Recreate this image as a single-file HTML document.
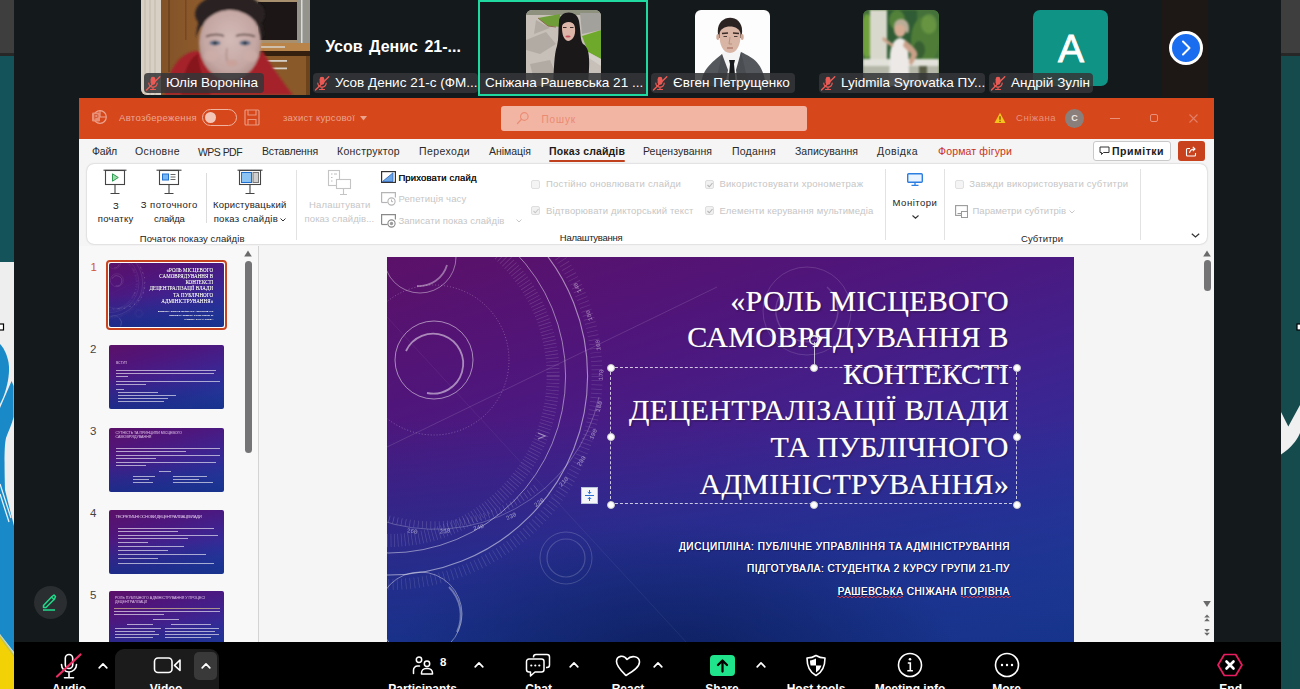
<!DOCTYPE html>
<html lang="uk">
<head>
<meta charset="utf-8">
<title>Zoom Meeting</title>
<style>
*{box-sizing:border-box;margin:0;padding:0}
html,body{width:1300px;height:689px;overflow:hidden;background:#14191c;font-family:"Liberation Sans","DejaVu Sans",sans-serif}
.abs{position:absolute}
#root{position:relative;width:1300px;height:689px;overflow:hidden;background:#14191c}
/* desktop edges */
#ledge{left:0;top:0;width:14px;height:689px;background:#fff;overflow:hidden}
#redge{left:1281px;top:0;width:19px;height:689px;background:#17494d;overflow:hidden}
/* gallery */
.tile{position:absolute;top:0;height:95px}
.nm{position:absolute;height:18px;line-height:18px;font-size:13.5px;color:#fff;background:rgba(52,54,56,.86);border-radius:4px;white-space:nowrap;padding:0 5px 0 22px;letter-spacing:0}
.nm svg{position:absolute;left:1px;top:1px}
/* ppt */
#ppt{left:79px;top:97px;width:1134px;height:544px;background:#e6e6e6;overflow:hidden}
#tbar{left:0;top:0;width:1134px;height:41px;background:#cc4420}
#tabs{left:0;top:41px;width:1134px;height:27px;background:#f5f5f5;font-size:11px;color:#333}
#tabs span{position:absolute;top:7px;white-space:nowrap}
#rib{left:8px;top:68px;width:1120px;height:79px;background:#fff;border-radius:7px;box-shadow:0 0 2px rgba(0,0,0,.25)}
#rib .t{position:absolute;font-size:9.5px;color:#222;white-space:nowrap;text-align:center}
#rib .d{color:#b9b9b9}
#rib .sep{position:absolute;width:1px;background:#dcdcdc}
#thumbs{left:0;top:150px;width:179px;height:394px;background:#f3f3f3}
#edit{left:179px;top:150px;width:955px;height:394px;background:#e9e9e9}
/* toolbar */
.lb{position:absolute;top:682.600px;font-size:12px;line-height:12px;font-weight:bold;color:#fff;white-space:nowrap;transform:translateX(-50%)}
.hd{position:absolute;width:8px;height:8px;border-radius:50%;background:#fff;border:1px solid #c9c9c9}
.th{border-radius:2px;overflow:hidden;background:linear-gradient(180deg,rgba(20,44,130,0) 50%,rgba(20,44,130,.7) 100%),linear-gradient(163deg,#5b1168 0%,#50157a 25%,#41218d 50%,#2f2e9a 72%,#2045aa 100%)}
.th i{position:absolute;height:1.300px;background:#fff;opacity:.6}
</style>
</head>
<body>
<div id="root">
<div id="ledge" class="abs"><svg width="14" height="689" viewBox="0 0 14 689" style="display:block">
<rect width="14" height="689" fill="#eeeeee"/>
<rect width="14" height="53" fill="#3e3e3e"/><rect y="53" width="14" height="3" fill="#272727"/>
<rect y="56" width="14" height="206" fill="#15535a"/>
<rect x="-1" y="324" width="4.5" height="6" fill="#fff" stroke="#000" stroke-width="1.2"/>
<path d="M0 344 C3 347 6 352 8 360 C10 368 9 378 6 389 C4 396 2 400 0 404Z" fill="#1a89c7"/>
<path d="M0 408 L11.6 381 L13.6 386 L13.6 417 C12 424 8 432 6 438 C4 446 4.5 470 5 490 L14 526 L14 652 L0 634Z" fill="#1a89c7"/>
<path d="M0 484 L11 518 M0 494 L9 522" stroke="#e8f0f4" stroke-width="1.300" fill="none"/>
<path d="M0 636 L14 655 L14 689 L0 689Z" fill="#f2d206"/>
<path d="M0 634 L14 653 L14 657 L0 638Z" fill="#9ab878" opacity=".5"/>
</svg></div>
  <div id="redge" class="abs"><svg width="19" height="689" viewBox="0 0 19 689" style="display:block">
<rect width="19" height="689" fill="#164b4e"/>
<rect width="19" height="53" fill="#3e3e3e"/><rect y="53" width="19" height="3" fill="#272727"/>
<rect x="16" y="324" width="4" height="6" fill="#fff" stroke="#000" stroke-width="1.2"/>
<path d="M0 412 L7.3 426.5 L19 405 L19 433 C17 438 14 442 12.5 443.5 C9 448 4 452 0 454.5Z" fill="#f0f0f0"/>
</svg></div>
  <div id="gallery" class="abs" style="left:0;top:0;width:1300px;height:97px">
<!-- tile 1 video -->
<div class="abs" style="left:141px;top:0;width:169px;height:95px;border-radius:0 0 0 6px;overflow:hidden;background:#8a5c30">
<svg width="169" height="95" viewBox="0 0 169 95" style="display:block">
<defs><filter id="b1" x="-20%" y="-20%" width="140%" height="140%"><feGaussianBlur stdDeviation="1.3"/></filter><filter id="b2" x="-20%" y="-20%" width="140%" height="140%"><feGaussianBlur stdDeviation="0.7"/></filter><filter id="b3" x="-30%" y="-30%" width="160%" height="160%"><feGaussianBlur stdDeviation="2.5"/></filter>
<linearGradient id="wood" x1="0" x2="1"><stop offset="0" stop-color="#7d4e25"/><stop offset=".35" stop-color="#8c5a2c"/><stop offset="1" stop-color="#815327"/></linearGradient>
<radialGradient id="skin" cx=".5" cy=".45" r=".6"><stop offset="0" stop-color="#d3bbb8"/><stop offset=".7" stop-color="#c4a6a2"/><stop offset="1" stop-color="#a98a84"/></radialGradient></defs>
<rect width="169" height="95" fill="url(#wood)"/>
<rect x="0" y="0" width="20" height="95" fill="#d8d0c4" filter="url(#b2)"/>
<path d="M4 0v95M9 0v95M14 0v95" stroke="#bfb6a8" stroke-width="1.500" opacity=".6"/>
<rect x="27" y="0" width="2" height="72" fill="#5f3816" opacity=".55"/><rect x="44" y="0" width="1.500" height="40" fill="#5f3816" opacity=".45"/>
<rect x="112" y="0" width="57" height="44" fill="#a8906e"/>
<rect x="117" y="2" width="39" height="38" fill="#1c1916" filter="url(#b2)"/>
<rect x="157" y="0" width="12" height="43" fill="#8f9494" opacity=".8"/><rect x="160" y="0" width="1.500" height="43" fill="#d9dcdc"/>
<rect x="116" y="43" width="53" height="8" fill="#b8844a" filter="url(#b2)"/>
<rect x="120" y="46" width="24" height="2" fill="#d5d0c8" opacity=".8"/>
<rect x="118" y="51" width="51" height="5" fill="#35200f"/>
<rect x="120" y="56" width="49" height="39" fill="#8a5929"/><rect x="165" y="56" width="4" height="39" fill="#6d431c"/>
<rect x="122" y="60" width="24" height="1.800" fill="#d4cec4"/><rect x="122" y="67.500" width="24" height="1.800" fill="#d4cec4"/>
<g filter="url(#b1)">
<path d="M24 95 C26 74 36 54 54 51 C60 50 62 56 66 66 L116 60 L121 50 C128 62 140 80 152 95Z" fill="#a5222b"/>
<path d="M40 95 C42 72 48 58 57 54 C58 66 62 80 70 95Z" fill="#86161f"/>
<ellipse cx="89" cy="14" rx="35" ry="20" fill="#2a2322"/>
<ellipse cx="89" cy="43" rx="31" ry="37" fill="url(#skin)"/>
<path d="M55 38 C56 8 76 0 89 0 C102 0 122 8 123 38 C117 18 102 10 89 10 C76 10 61 18 55 38Z" fill="#2a2322"/>
<ellipse cx="74" cy="43" rx="5.500" ry="2.600" fill="#5d6f88"/><ellipse cx="104" cy="43" rx="5.500" ry="2.600" fill="#5d6f88"/>
<ellipse cx="74" cy="43" rx="2" ry="2" fill="#2c3442"/><ellipse cx="104" cy="43" rx="2" ry="2" fill="#2c3442"/>
<path d="M65 36.500 Q74 33 83 36 M95 36 Q104 33 114 36.500" stroke="#4e3b38" stroke-width="1.500" fill="none"/>
<path d="M86 48 Q84 60 88 64 Q92 66 96 63" stroke="#b08f88" stroke-width="1.500" fill="none"/>
<ellipse cx="91" cy="63" rx="6" ry="3.500" fill="#c9a39b"/>
<ellipse cx="70" cy="56" rx="7" ry="6" fill="#cfaea8" opacity=".7"/><ellipse cx="110" cy="56" rx="7" ry="6" fill="#cfaea8" opacity=".7"/>
</g>
</svg></div>
<div class="nm" style="left:144px;top:72.500px;width:120px;height:20px;line-height:20px"><svg style="top:2px" width="16" height="16" viewBox="0 0 16 16"><rect x="5.600" y="1.800" width="4.800" height="8" rx="2.400" fill="#ea5a55"/><path d="M3.800 8a4.200 4.200 0 0 0 8.400 0M8 12.200v2M5.500 14.500h5" stroke="#ea5a55" stroke-width="1.200" fill="none" stroke-linecap="round"/><path d="M1.500 15L14.800 1.800" stroke="#ea5a55" stroke-width="1.400" stroke-linecap="round"/></svg>Юлія Вороніна</div>
<!-- tile 2 -->
<div class="abs" style="left:310px;top:38px;width:166px;text-align:center;font-size:16px;word-spacing:2px;font-weight:bold;color:#fff;white-space:nowrap">Усов Денис 21-...</div>
<div class="nm" style="left:313px;top:72.500px;width:165px;height:20px;line-height:20px"><svg style="top:2px" width="16" height="16" viewBox="0 0 16 16"><rect x="5.600" y="1.800" width="4.800" height="8" rx="2.400" fill="#ea5a55"/><path d="M3.800 8a4.200 4.200 0 0 0 8.400 0M8 12.200v2M5.500 14.500h5" stroke="#ea5a55" stroke-width="1.200" fill="none" stroke-linecap="round"/><path d="M1.500 15L14.800 1.800" stroke="#ea5a55" stroke-width="1.400" stroke-linecap="round"/></svg>Усов Денис 21-с (ФМ...</div>
<!-- tile 3 active -->
<div class="abs" style="left:478px;top:0;width:170px;height:96px;border:2px solid #20d9a0"></div>
<div class="abs" style="left:526px;top:10px;width:75px;height:76px;border-radius:6px;overflow:hidden;background:#c4beb7">
<svg width="75" height="76" viewBox="0 0 75 76" style="display:block;filter:blur(.7px)">
<rect width="75" height="76" fill="#c6c0b9"/>
<path d="M0 0H75V5H0z" fill="#8f917f"/>
<path d="M0 30 L20 22 L30 34 L14 44 L0 40z M4 54 L24 50 L30 64 L8 70z M10 10 L24 18 L8 24z" fill="#a9a39b" opacity=".7"/>
<path d="M12 8 L34 4 L36 17 L22 16Z" fill="#6f9e38"/><path d="M12 8 L22 16 L30 17" stroke="#8a6a4a" stroke-width="1" fill="none"/>
<path d="M54 3 L75 3 L75 20 L56 24Z" fill="#a3a19b"/>
<path d="M56 26 L75 20 L75 49 L62 42Z" fill="#6fa92c"/>
<path d="M62 42 L75 49 L75 56 L60 46z" fill="#d4cfc8"/>
<path d="M33 12 C33 0 51 -1 53 11 C55 22 54 30 57 34 C64 38 64 48 62 76 L27 76 C28 60 28 44 31 36 C33 28 32 20 33 12Z" fill="#1b181a"/>
<path d="M36 18 C36 8 48 8 49 18 C50 26 46 31 42 31 C38 30 36 25 36 18Z" fill="#dcb6a8"/>
<path d="M35 16 C36 6 49 5 50 17 C47 11 40 10 35 16Z" fill="#1b181a"/>
<ellipse cx="42" cy="26.500" rx="2.600" ry="1.100" fill="#c54f5e"/>
<path d="M37 17.500h3.500M44 17.500h3.500" stroke="#3a2a2a" stroke-width="1"/>
</svg></div>
<div class="nm" style="left:480px;top:72.500px;width:166px;height:21px;line-height:20px;padding-left:5px;border-radius:0">Сніжана Рашевська 21 ...</div>
<!-- tile 4 -->
<div class="abs" style="left:695px;top:10px;width:75px;height:76px;border-radius:6px;overflow:hidden;background:#fdfdfd">
<svg width="75" height="76" viewBox="0 0 75 76" style="display:block;filter:blur(.6px)">
<path d="M6 76 C7 62 12 56 27 44 L46 42 C58 48 68 52 71 76Z" fill="#54575b"/>
<path d="M27 44 L30 40 L44 40 L46 42 L42 76 L31 76Z" fill="#f5f5f5"/>
<path d="M27 44 L33 60 L30 76 L20 76z M46 42 L41 60 L43 76 L54 76z" fill="#4a4d51"/>
<path d="M34 50 L40 50 L39 54 L41 76 L33 76 L35 54Z" fill="#18191b"/>
<path d="M23 24 C20 3 49 2 47 23 L46 28 L24 28Z" fill="#2a2321"/>
<path d="M24.500 24 C25 14 45 14 45.500 24 C46 34 42 43 35 43 C28 43 24 34 24.500 24Z" fill="#d8b5a5"/>
<ellipse cx="22.800" cy="27" rx="1.500" ry="3" fill="#d0a898"/><ellipse cx="47.200" cy="27" rx="1.500" ry="3" fill="#d0a898"/>
<path d="M27 23.500 L33 23 M38 23 L44 23.500" stroke="#3a2b27" stroke-width="1.500"/>
<path d="M28.500 26.500h3.500M39 26.500h3.500" stroke="#4a3a36" stroke-width="1.200"/>
<path d="M35 27 L34 34 L37 34" stroke="#b8917f" stroke-width="1" fill="none"/>
<path d="M32 38 h6" stroke="#a8705f" stroke-width="1.200"/>
</svg></div>
<div class="nm" style="left:651px;top:72.500px;width:144px;height:20px;line-height:20px"><svg style="top:2px" width="16" height="16" viewBox="0 0 16 16"><rect x="5.600" y="1.800" width="4.800" height="8" rx="2.400" fill="#ea5a55"/><path d="M3.800 8a4.200 4.200 0 0 0 8.400 0M8 12.200v2M5.500 14.500h5" stroke="#ea5a55" stroke-width="1.200" fill="none" stroke-linecap="round"/><path d="M1.500 15L14.800 1.800" stroke="#ea5a55" stroke-width="1.400" stroke-linecap="round"/></svg>Євген Петрущенко</div>
<!-- tile 5 -->
<div class="abs" style="left:863px;top:10px;width:76px;height:76px;border-radius:6px;overflow:hidden;background:#4f7a3a">
<svg width="76" height="76" viewBox="0 0 76 76" style="display:block;filter:blur(.8px)"><g>
<rect width="76" height="76" fill="#44703a"/>
<rect x="24" y="0" width="30" height="50" fill="#2f5c34"/><ellipse cx="34" cy="10" rx="8" ry="10" fill="#6a9a40" opacity=".6"/>
<ellipse cx="62" cy="30" rx="14" ry="24" fill="#4f7d38"/><ellipse cx="66" cy="14" rx="8" ry="10" fill="#7aa848" opacity=".55"/><ellipse cx="56" cy="40" rx="6" ry="9" fill="#2d5230" opacity=".7"/>
<ellipse cx="4" cy="26" rx="6" ry="22" fill="#6fa23c"/>
<rect x="7" y="0" width="17" height="76" fill="#d9d8cc"/>
<rect x="0" y="49" width="76" height="7" fill="#e2e2da"/>
<rect x="0" y="56" width="76" height="20" fill="#b5b8a8"/>
<rect x="56" y="56" width="8" height="20" fill="#585c44"/>
<path d="M27 44 C28 34 32 28 38 28 L42 30 C46 36 46 50 46 76 L26 76Z" fill="#ece9e6"/>
<path d="M42 30 C50 36 56 42 54 46 L48 56 L46 52 L48 44 L40 36Z" fill="#c9a088"/>
<path d="M30 36 L22 30 L20 28" stroke="#c9a088" stroke-width="3" fill="none"/>
<ellipse cx="37" cy="19" rx="6" ry="8" fill="#d5ad94"/>
<path d="M31 18 C30 6 46 6 46 18 C46 24 44 24 43 22 C42 14 36 12 31 18Z" fill="#b9ad98"/>
</g></svg></div>
<div class="nm" style="left:819px;top:72.500px;width:166px;height:20px;line-height:20px"><svg style="top:2px" width="16" height="16" viewBox="0 0 16 16"><rect x="5.600" y="1.800" width="4.800" height="8" rx="2.400" fill="#ea5a55"/><path d="M3.800 8a4.200 4.200 0 0 0 8.400 0M8 12.200v2M5.500 14.500h5" stroke="#ea5a55" stroke-width="1.200" fill="none" stroke-linecap="round"/><path d="M1.500 15L14.800 1.800" stroke="#ea5a55" stroke-width="1.400" stroke-linecap="round"/></svg>Lyidmila Syrovatka ПУ...</div>
<!-- tile 6 -->
<div class="abs" style="left:1033px;top:10px;width:75px;height:76px;border-radius:7px;background:#0f9384;color:#fff;text-align:center;font-size:39px;line-height:77px;-webkit-text-stroke:.9px #fff;padding-left:1px">A</div>
<div class="nm" style="left:989px;top:72.500px;width:104px;height:20px;line-height:20px"><svg style="top:2px" width="16" height="16" viewBox="0 0 16 16"><rect x="5.600" y="1.800" width="4.800" height="8" rx="2.400" fill="#ea5a55"/><path d="M3.800 8a4.200 4.200 0 0 0 8.400 0M8 12.200v2M5.500 14.500h5" stroke="#ea5a55" stroke-width="1.200" fill="none" stroke-linecap="round"/><path d="M1.500 15L14.800 1.800" stroke="#ea5a55" stroke-width="1.400" stroke-linecap="round"/></svg>Андрій Зулін</div>
<!-- next arrow -->
<div class="abs" style="left:1162px;top:0;width:46px;height:97px;background:#1d1715"></div>
<div class="abs" style="left:1169px;top:31px;width:34px;height:34px;border-radius:50%;background:#1a6dee;border:3px solid #fff"></div>
<svg class="abs" style="left:1179px;top:38px" width="14" height="20" viewBox="0 0 14 20"><path d="M4 3.500L10.500 10L4 16.500" stroke="#fff" stroke-width="2" fill="none" stroke-linecap="round" stroke-linejoin="round"/></svg>
</div>
  <div id="ppt" class="abs" style="left:79px;top:98px;width:1135px;height:544px;overflow:hidden;background:#e9e9e9">
<div class="abs" id="pw" style="left:-79px;top:-98px;width:1300px;height:689px">
<!-- title bar -->
<div class="abs" style="left:79px;top:98px;width:1136px;height:41px;background:#d6471c"></div>
<svg class="abs" style="left:91px;top:109px" width="16" height="16" viewBox="0 0 16 16"><circle cx="9" cy="8" r="6.3" fill="none" stroke="#eda48f" stroke-width="1.2"/><path d="M9 1.700V8H15.300" stroke="#eda48f" stroke-width="1.100" fill="none"/><rect x="1" y="3.500" width="8" height="9" rx="1.200" fill="#e88f76"/><path d="M3.800 10.500V5.500H5.500a1.500 1.500 0 0 1 0 3H3.800" stroke="#d65a36" stroke-width="1.100" fill="none"/></svg>
<span style="position:absolute;left:119.0px;top:111.7px;white-space:nowrap;font-size:9.5px;letter-spacing:0.343px;color:#eca792">Автозбереження</span>
<div class="abs" style="left:202px;top:109px;width:35px;height:17px;border:1.5px solid #f0b3a0;border-radius:9px"></div>
<div class="abs" style="left:205px;top:112px;width:11px;height:11px;border-radius:50%;background:#f4c6b8"></div>
<svg class="abs" style="left:244px;top:109px" width="16" height="17" viewBox="0 0 16 17"><rect x="1" y="1" width="14" height="15" rx="1" fill="none" stroke="#e9987f" stroke-width="1.200"/><path d="M4 1v5h8V1M4 16v-5.500h8V16" stroke="#e9987f" stroke-width="1.100" fill="none"/></svg>
<span style="position:absolute;left:283.0px;top:111.7px;white-space:nowrap;font-size:9.5px;letter-spacing:0.224px;color:#eca38c">захист курсової</span>
<svg class="abs" style="left:360px;top:116px" width="7" height="5" viewBox="0 0 7 5"><path d="M0 0h7L3.500 4.500z" fill="#eca38c"/></svg>
<div class="abs" style="left:501px;top:105.500px;width:305.500px;height:25.500px;background:#f2b5a4;border-radius:3px"></div>
<svg class="abs" style="left:516px;top:111px" width="14" height="14" viewBox="0 0 14 14"><circle cx="8.300" cy="5.500" r="3.800" fill="none" stroke="#ea8d76" stroke-width="1.200"/><path d="M5.500 8.300L1.500 12.500" stroke="#ea8d76" stroke-width="1.300" stroke-linecap="round"/></svg>
<span style="position:absolute;left:541.5px;top:113.6px;white-space:nowrap;font-size:10px;letter-spacing:0.869px;color:#ea8a72">Пошук</span>
<svg class="abs" style="left:994px;top:112px" width="12" height="12" viewBox="0 0 12 12"><path d="M6 .8L11.500 11H.5z" fill="#f6c31c"/><path d="M6 4.200v3.600M6 8.800v1.100" stroke="#7a3c00" stroke-width="1.200"/></svg>
<span style="position:absolute;left:1016.0px;top:112.2px;white-space:nowrap;font-size:9.5px;letter-spacing:0.516px;color:#e9917a">Сніжана</span>
<div class="abs" style="left:1065px;top:108.500px;width:19px;height:19px;border-radius:50%;background:#8b7f7b;color:#f2e6e2;font-size:9px;line-height:19px;text-align:center;font-weight:bold">С</div>
<div class="abs" style="left:1110px;top:118px;width:10px;height:1.300px;background:#e9917a"></div>
<div class="abs" style="left:1150px;top:114px;width:8px;height:8px;border:1.200px solid #e9917a;border-radius:2px"></div>
<svg class="abs" style="left:1189px;top:114px" width="9" height="9" viewBox="0 0 9 9"><path d="M.5.500l8 8M8.500.500l-8 8" stroke="#e27f66" stroke-width="1.100"/></svg>
<!-- tabs row -->
<div class="abs" style="left:79px;top:139px;width:1136px;height:108px;background:#f5f5f5"></div>
<span style="position:absolute;left:92.0px;top:144.6px;white-space:nowrap;font-size:10.5px;letter-spacing:-0.207px;color:#2a2a2a">Файл</span>
<span style="position:absolute;left:135.0px;top:144.6px;white-space:nowrap;font-size:10.5px;letter-spacing:0.388px;color:#2a2a2a">Основне</span>
<span style="position:absolute;left:198.0px;top:145.5px;white-space:nowrap;font-size:10.5px;letter-spacing:-0.549px;color:#2a2a2a">WPS PDF</span>
<span style="position:absolute;left:262.0px;top:144.6px;white-space:nowrap;font-size:10.5px;letter-spacing:-0.138px;color:#2a2a2a">Вставлення</span>
<span style="position:absolute;left:337.0px;top:144.6px;white-space:nowrap;font-size:10.5px;letter-spacing:0.284px;color:#2a2a2a">Конструктор</span>
<span style="position:absolute;left:419.0px;top:144.6px;white-space:nowrap;font-size:10.5px;letter-spacing:0.428px;color:#2a2a2a">Переходи</span>
<span style="position:absolute;left:489.0px;top:144.6px;white-space:nowrap;font-size:10.5px;letter-spacing:-0.029px;color:#2a2a2a">Анімація</span>
<span style="position:absolute;left:549.0px;top:144.6px;white-space:nowrap;font-size:10.5px;letter-spacing:0.141px;color:#1a1a1a;font-weight:bold">Показ слайдів</span>
<div class="abs" style="left:549px;top:159.500px;width:76px;height:2px;background:#c0401e;border-radius:1px"></div>
<span style="position:absolute;left:643.0px;top:144.6px;white-space:nowrap;font-size:10.5px;letter-spacing:0.046px;color:#2a2a2a">Рецензування</span>
<span style="position:absolute;left:732.0px;top:144.6px;white-space:nowrap;font-size:10.5px;letter-spacing:0.228px;color:#2a2a2a">Подання</span>
<span style="position:absolute;left:795.0px;top:144.6px;white-space:nowrap;font-size:10.5px;letter-spacing:0.016px;color:#2a2a2a">Записування</span>
<span style="position:absolute;left:877.0px;top:144.6px;white-space:nowrap;font-size:10.5px;letter-spacing:0.460px;color:#2a2a2a">Довідка</span>
<span style="position:absolute;left:938.0px;top:144.6px;white-space:nowrap;font-size:10.5px;letter-spacing:0.165px;color:#c8321a">Формат фігури</span>
<div class="abs" style="left:1093px;top:141px;width:78px;height:20px;background:#fff;border:1px solid #c9c9c9;border-radius:3px"></div>
<svg class="abs" style="left:1099px;top:146px" width="11" height="10" viewBox="0 0 11 10"><path d="M1 1h9v5.500H4.500L2.500 8.500V6.500H1z" fill="none" stroke="#333" stroke-width="1"/></svg>
<span style="position:absolute;left:1112.0px;top:144.6px;white-space:nowrap;font-size:10.5px;letter-spacing:0.506px;color:#1a1a1a;font-weight:bold">Примітки</span>
<div class="abs" style="left:1178px;top:141px;width:27px;height:20px;background:#c9421e;border-radius:3px"></div>
<svg class="abs" style="left:1185px;top:145px" width="13" height="12" viewBox="0 0 13 12"><path d="M5 3.500H2.500a1 1 0 0 0-1 1V10a1 1 0 0 0 1 1H9.500a1 1 0 0 0 1-1V8" fill="none" stroke="#fff" stroke-width="1.100"/><path d="M4.500 8c.5-2.500 2-4 5-4M7.800 1.800L10 4 7.800 6.200" fill="none" stroke="#fff" stroke-width="1.100"/></svg>
<!--RIBBON-->
<div class="abs" style="left:87px;top:164px;width:1120px;height:80px;background:#fff;border-radius:7px;box-shadow:0 0 2px rgba(0,0,0,.28)"></div>
<!-- icon1: from beginning -->
<svg class="abs" style="left:103px;top:169px" width="24" height="26" viewBox="0 0 24 26"><path d="M.5 1.200h23" stroke="#444" stroke-width="1.100"/><rect x="2.500" y="1.500" width="19" height="14" fill="#fff" stroke="#444" stroke-width="1.100"/><path d="M12 15.500V24M7.500 24.500h9" stroke="#444" stroke-width="1.100"/><path d="M9.500 4.800L15.300 8.500 9.500 12.200z" fill="#9fdcae" stroke="#2e9b52" stroke-width="1"/></svg>
<span style="position:absolute;left:113.0px;top:200.0px;white-space:nowrap;font-size:9.5px;letter-spacing:0.250px;color:#222">З</span>
<span style="position:absolute;left:97.7px;top:213.3px;white-space:nowrap;font-size:9.5px;letter-spacing:0.342px;color:#222">початку</span>
<!-- icon2 -->
<svg class="abs" style="left:156px;top:169px" width="26" height="26" viewBox="0 0 26 26"><path d="M.5 1.200h25" stroke="#444" stroke-width="1.100"/><rect x="3.500" y="1.500" width="19" height="14" fill="#fff" stroke="#444" stroke-width="1.100"/><path d="M13 15.500V24M8.500 24.500h9" stroke="#444" stroke-width="1.100"/><rect x="6.500" y="5" width="6" height="6" fill="#79b7f2" stroke="#1f6fd0" stroke-width="1"/><path d="M14.500 5.500h5M14.500 8h5M14.500 10.500h5" stroke="#666" stroke-width="1"/></svg>
<span style="position:absolute;left:140.8px;top:199.2px;white-space:nowrap;font-size:9.5px;letter-spacing:0.451px;color:#222">З поточного</span>
<span style="position:absolute;left:153.9px;top:213.3px;white-space:nowrap;font-size:9.5px;letter-spacing:-0.153px;color:#222">слайда</span>
<div class="abs" style="left:205.500px;top:173px;width:1px;height:50px;background:#dcdcdc"></div>
<!-- icon3 -->
<svg class="abs" style="left:237px;top:169px" width="26" height="26" viewBox="0 0 26 26"><path d="M.5 1.200h25" stroke="#444" stroke-width="1.100"/><rect x="2.500" y="1.500" width="21" height="14" fill="#fff" stroke="#444" stroke-width="1.100"/><path d="M13 15.500V24M8.500 24.500h9" stroke="#444" stroke-width="1.100"/><rect x="4.500" y="3.500" width="10" height="10" fill="#8cc3f5" stroke="#1f6fd0" stroke-width="1"/><rect x="16" y="3.500" width="5.500" height="10" fill="#cfcfcf" stroke="#777" stroke-width="1"/></svg>
<span style="position:absolute;left:213.0px;top:199.2px;white-space:nowrap;font-size:9.5px;letter-spacing:0.189px;color:#222">Користувацький</span>
<span style="position:absolute;left:213.7px;top:213.3px;white-space:nowrap;font-size:9.5px;letter-spacing:0.288px;color:#222">показ слайдів</span>
<svg class="abs" style="left:280px;top:218px" width="6" height="4" viewBox="0 0 6 4"><path d="M.5.500L3 3 5.500.500" stroke="#333" stroke-width="1" fill="none"/></svg>
<span style="position:absolute;left:139.8px;top:232.5px;white-space:nowrap;font-size:9.5px;letter-spacing:0.057px;color:#222">Початок показу слайдів</span>
<div class="abs" style="left:296px;top:170px;width:1px;height:70px;background:#e2e2e2"></div>
<!-- icon4 disabled -->
<svg class="abs" style="left:327px;top:169px" width="26" height="28" viewBox="0 0 26 28"><rect x="1.500" y="1.500" width="11" height="15" fill="#fff" stroke="#c4c4c4" stroke-width="1.100"/><path d="M4 5h1.500M4 8.500h1.500M4 12h1.500M7 5h3" stroke="#bdbdbd" stroke-width="1.200"/><rect x="9.500" y="10.500" width="14" height="9" fill="#fff" stroke="#c4c4c4" stroke-width="1.100"/><path d="M16.500 19.500V25M13 25.500h7" stroke="#c4c4c4" stroke-width="1.100"/></svg>
<span style="position:absolute;left:309.0px;top:199.2px;white-space:nowrap;font-size:9.5px;letter-spacing:0.192px;color:#c6c6c6">Налаштувати</span>
<span style="position:absolute;left:304.6px;top:213.3px;white-space:nowrap;font-size:9.5px;letter-spacing:0.077px;color:#c6c6c6">показ слайдів...</span>
<!-- column -->
<svg class="abs" style="left:381px;top:171px" width="15" height="12" viewBox="0 0 15 12"><rect x=".6" y=".6" width="13.800" height="10.800" fill="#fff" stroke="#333" stroke-width="1.200"/><path d="M1.500 10.500L12 1.800V10.500z" fill="#6aa6e6" stroke="#2c65b8" stroke-width=".8"/></svg>
<span style="position:absolute;left:398.4px;top:171.5px;white-space:nowrap;font-size:9.5px;letter-spacing:0.140px;color:#1c1c1c;text-shadow:0 0 .3px #000">Приховати слайд</span>
<svg class="abs" style="left:381px;top:192px" width="15" height="14" viewBox="0 0 15 14"><path d="M.6 10.500V.6h13.800v5" fill="none" stroke="#b5b5b5" stroke-width="1.200"/><path d="M.6 10.500h6" stroke="#b5b5b5" stroke-width="1.200"/><circle cx="10.500" cy="9.500" r="3.600" fill="#fff" stroke="#b5b5b5" stroke-width="1.100"/><path d="M10.500 7.500v2.200h1.600" stroke="#b5b5b5" stroke-width="1" fill="none"/></svg>
<span style="position:absolute;left:398.4px;top:193.0px;white-space:nowrap;font-size:9.5px;letter-spacing:0.140px;color:#c6c6c6">Репетиція часу</span>
<svg class="abs" style="left:381px;top:214px" width="15" height="14" viewBox="0 0 15 14"><path d="M.6 10.500V.6h13.800v5" fill="none" stroke="#8a8a8a" stroke-width="1.200"/><path d="M.6 10.500h6" stroke="#8a8a8a" stroke-width="1.200"/><circle cx="10.500" cy="9.500" r="3.600" fill="#fff" stroke="#8a8a8a" stroke-width="1.100"/><circle cx="10.500" cy="9.500" r="1.700" fill="#9a9a9a"/></svg>
<span style="position:absolute;left:398.4px;top:214.7px;white-space:nowrap;font-size:9.5px;letter-spacing:0.088px;color:#c6c6c6">Записати показ слайдів</span>
<svg class="abs" style="left:516px;top:219px" width="6" height="4" viewBox="0 0 6 4"><path d="M.5.500L3 3 5.500.500" stroke="#c9c9c9" stroke-width="1" fill="none"/></svg>
<!-- checkboxes -->
<div class="abs" style="left:531px;top:179.500px;width:9px;height:9px;border:1px solid #e0e0e0;border-radius:2px;background:#f4f4f4"></div>
<span style="position:absolute;left:545.9px;top:177.7px;white-space:nowrap;font-size:9.5px;letter-spacing:0.229px;color:#c6c6c6">Постійно оновлювати слайди</span>
<div class="abs" style="left:531px;top:206px;width:9px;height:9px;border:1px solid #dedede;border-radius:2px;background:#f1f1f1"></div>
<svg class="abs" style="left:532px;top:207px" width="8" height="8" viewBox="0 0 8 8"><path d="M1.500 4L3.300 5.800 6.500 2" stroke="#c8c8c8" stroke-width="1.100" fill="none"/></svg>
<span style="position:absolute;left:545.9px;top:204.5px;white-space:nowrap;font-size:9.5px;letter-spacing:0.149px;color:#c6c6c6">Відтворювати дикторський текст</span>
<div class="abs" style="left:704.500px;top:179.500px;width:9px;height:9px;border:1px solid #dedede;border-radius:2px;background:#f1f1f1"></div>
<svg class="abs" style="left:705.500px;top:180.500px" width="8" height="8" viewBox="0 0 8 8"><path d="M1.500 4L3.300 5.800 6.500 2" stroke="#b5b5b5" stroke-width="1.100" fill="none"/></svg>
<span style="position:absolute;left:719.4px;top:177.7px;white-space:nowrap;font-size:9.5px;letter-spacing:0.271px;color:#c6c6c6">Використовувати хронометраж</span>
<div class="abs" style="left:704.500px;top:206px;width:9px;height:9px;border:1px solid #dedede;border-radius:2px;background:#f1f1f1"></div>
<svg class="abs" style="left:705.500px;top:207px" width="8" height="8" viewBox="0 0 8 8"><path d="M1.500 4L3.300 5.800 6.500 2" stroke="#b5b5b5" stroke-width="1.100" fill="none"/></svg>
<span style="position:absolute;left:719.4px;top:204.5px;white-space:nowrap;font-size:9.5px;letter-spacing:0.146px;color:#c6c6c6">Елементи керування мультимедіа</span>
<span style="position:absolute;left:559.8px;top:232.2px;white-space:nowrap;font-size:9.5px;letter-spacing:-0.248px;color:#222">Налаштування</span>
<div class="abs" style="left:885px;top:169px;width:1px;height:71px;background:#e2e2e2"></div>
<!-- monitors -->
<svg class="abs" style="left:907px;top:173px" width="16" height="13" viewBox="0 0 16 13"><rect x=".7" y=".7" width="14.600" height="8.600" rx="1" fill="#e8f3ff" stroke="#2b7de0" stroke-width="1.400"/><path d="M8 9.500V12M4.500 12.300h7" stroke="#2b7de0" stroke-width="1.300"/></svg>
<span style="position:absolute;left:892.6px;top:197.1px;white-space:nowrap;font-size:9.5px;letter-spacing:0.502px;color:#222">Монітори</span>
<svg class="abs" style="left:911.500px;top:214.500px" width="7" height="4" viewBox="0 0 7 4"><path d="M.5.500L3.500 3.200 6.500.500" stroke="#333" stroke-width="1.100" fill="none"/></svg>
<div class="abs" style="left:944px;top:169px;width:1px;height:71px;background:#e2e2e2"></div>
<div class="abs" style="left:955px;top:179.500px;width:9px;height:9px;border:1px solid #e0e0e0;border-radius:2px;background:#f4f4f4"></div>
<span style="position:absolute;left:969.3px;top:177.7px;white-space:nowrap;font-size:9.5px;letter-spacing:0.219px;color:#c6c6c6">Завжди використовувати субтитри</span>
<svg class="abs" style="left:955px;top:204.500px" width="13" height="13" viewBox="0 0 13 13"><rect x=".6" y=".6" width="11.800" height="9.800" fill="#fff" stroke="#9a9a9a" stroke-width="1.100"/><path d="M2.500 8.500h3.500M7 8.500h3.500" stroke="#9a9a9a" stroke-width="1.100"/><rect x="6.500" y="6.500" width="6" height="6" fill="#fff" stroke="#9a9a9a" stroke-width="1"/></svg>
<span style="position:absolute;left:972.5px;top:204.5px;white-space:nowrap;font-size:9.5px;letter-spacing:0.012px;color:#c6c6c6">Параметри субтитрів</span>
<svg class="abs" style="left:1069px;top:209.500px" width="6" height="4" viewBox="0 0 6 4"><path d="M.5.500L3 3 5.500.500" stroke="#c9c9c9" stroke-width="1" fill="none"/></svg>
<span style="position:absolute;left:1021.0px;top:232.5px;white-space:nowrap;font-size:9.5px;letter-spacing:0.029px;color:#222">Субтитри</span>
<div class="abs" style="left:1139.500px;top:169px;width:1px;height:71px;background:#e2e2e2"></div>
<svg class="abs" style="left:1191px;top:232.500px" width="9" height="5" viewBox="0 0 9 5"><path d="M.8.700L4.500 4 8.200.700" stroke="#333" stroke-width="1.200" fill="none"/></svg>
<!--/RIBBON-->
<!--PANEL-->
<div class="abs" style="left:79px;top:246px;width:179px;height:400px;background:#f8f8f8"></div>
<div class="abs" style="left:258px;top:246px;width:1px;height:400px;background:#d4d4d4"></div>
<div class="abs" style="left:259px;top:246px;width:956px;height:400px;background:#f5f5f5"></div>
<span style="position:absolute;left:90.5px;top:261.0px;white-space:nowrap;font-size:11.5px;color:#d2552f">1</span>
<span style="position:absolute;left:90.0px;top:343.0px;white-space:nowrap;font-size:11.5px;color:#444">2</span>
<span style="position:absolute;left:90.0px;top:425.0px;white-space:nowrap;font-size:11.5px;color:#444">3</span>
<span style="position:absolute;left:90.0px;top:507.0px;white-space:nowrap;font-size:11.5px;color:#444">4</span>
<span style="position:absolute;left:90.0px;top:589.0px;white-space:nowrap;font-size:11.5px;color:#444">5</span>
<div class="abs" style="left:106px;top:259.500px;width:121px;height:70px;border:2px solid #c8431f;border-radius:4px;background:#fff"></div>
<div class="abs th" style="left:109px;top:262.500px;width:115px;height:64px"><div style="position:absolute;left:0;top:0;width:687px;height:386px;transform:scale(.1675);transform-origin:0 0">
<svg class="abs" style="left:0;top:0" width="687" height="386" viewBox="0 0 687 386"><g fill="none" stroke="#fff"><circle cx="1.6" cy="119" r="177" stroke-width="1" opacity=".45"/><circle cx="1.6" cy="119" r="199" stroke-width="1.1" opacity=".5"/><circle cx="1.6" cy="119" r="164.5" stroke-width="13" stroke-dasharray=".7 2.8" opacity="0.17"/><circle cx="1.6" cy="119" r="208.5" stroke-width="11" stroke-dasharray=".7 3.6" opacity="0.15"/><circle cx="47" cy="103" r="39" stroke-width="1" opacity=".5"/><path d="M19 94 A30 30 0 1 1 40 136" stroke-width="1.800" opacity=".5"/><circle cx="47" cy="103" r="75" stroke-width=".8" stroke-dasharray="1 2" opacity=".35"/><circle cx="33" cy="0" r="36" stroke-width="1" opacity=".4"/><path d="M30 29 A29 29 0 0 0 60 8" stroke-width="1.800" opacity=".4"/><circle cx="33" cy="357" r="42" stroke-width="1" opacity=".4"/><path d="M62 330 A40 40 0 0 1 70 375" stroke-width="1.800" opacity=".35"/><path d="M-10 262 A168 168 0 0 0 212 140" stroke-width=".8" opacity=".3"/><path d="M-10 258 A163 163 0 0 0 150 230" stroke-width="7" stroke-dasharray=".7 3.500" opacity=".2"/><circle cx="179" cy="301" r="26" stroke-width=".8" opacity=".22"/><circle cx="179" cy="301" r="19" stroke-width="1.200" opacity=".18"/><circle cx="420" cy="54" r="44" stroke-width=".8" opacity=".18"/><path d="M392 40 A31 31 0 1 0 440 30" stroke-width="1.500" opacity=".16"/><path d="M0 190 L330 30" stroke-width=".6" opacity=".22"/><path d="M0 60 L300 386" stroke-width=".5" opacity=".12"/><path d="M151 176 l7 3 -7 3" stroke-width="1.300" opacity=".45"/></g><g font-size="6" fill="#fff" opacity=".5" font-family="Liberation Mono,monospace" text-anchor="middle"><text x="25" y="276" transform="rotate(7 25 276)">260</text><text x="58" y="276" transform="rotate(-4 58 276)">250</text><text x="92" y="272" transform="rotate(-15 92 272)">240</text><text x="125" y="261" transform="rotate(-26 125 261)">230</text><text x="153" y="247" transform="rotate(-36 153 247)">220</text><text x="178" y="226" transform="rotate(-47 178 226)">210</text><text x="196" y="205" transform="rotate(-56 196 205)">200</text><text x="208" y="178" transform="rotate(-65 208 178)">190</text><text x="214" y="150" transform="rotate(-74 214 150)">180</text><text x="216" y="118" transform="rotate(-85 216 118)">170</text><text x="213" y="88" transform="rotate(-95 213 88)">160</text><text x="204" y="58" transform="rotate(-106 204 58)">150</text><text x="192" y="30" transform="rotate(-117 192 30)">140</text></g></svg>
<div class="abs" style="left:-387px;top:-257px;width:1300px;height:689px;color:#fff">
<span style="position:absolute;left:730.3px;top:283.5px;white-space:nowrap;font-size:30px;letter-spacing:0.320px;font-family:'Liberation Serif','DejaVu Serif',serif;text-shadow:0 0 1px rgba(255,255,255,.55),1px 1px 2px rgba(0,0,0,.45)">«РОЛЬ МІСЦЕВОГО</span>
<span style="position:absolute;left:687.3px;top:320.1px;white-space:nowrap;font-size:30px;letter-spacing:0.353px;font-family:'Liberation Serif','DejaVu Serif',serif;text-shadow:0 0 1px rgba(255,255,255,.55),1px 1px 2px rgba(0,0,0,.45)">САМОВРЯДУВАННЯ В</span>
<span style="position:absolute;left:843.0px;top:356.7px;white-space:nowrap;font-size:30px;letter-spacing:-0.094px;font-family:'Liberation Serif','DejaVu Serif',serif;text-shadow:0 0 1px rgba(255,255,255,.55),1px 1px 2px rgba(0,0,0,.45)">КОНТЕКСТІ</span>
<span style="position:absolute;left:629.0px;top:393.3px;white-space:nowrap;font-size:30px;letter-spacing:0.373px;font-family:'Liberation Serif','DejaVu Serif',serif;text-shadow:0 0 1px rgba(255,255,255,.55),1px 1px 2px rgba(0,0,0,.45)">ДЕЦЕНТРАЛІЗАЦІЇ ВЛАДИ</span>
<span style="position:absolute;left:770.6px;top:429.9px;white-space:nowrap;font-size:30px;letter-spacing:0.084px;font-family:'Liberation Serif','DejaVu Serif',serif;text-shadow:0 0 1px rgba(255,255,255,.55),1px 1px 2px rgba(0,0,0,.45)">ТА ПУБЛІЧНОГО</span>
<span style="position:absolute;left:699.4px;top:466.5px;white-space:nowrap;font-size:30px;letter-spacing:0.363px;font-family:'Liberation Serif','DejaVu Serif',serif;text-shadow:0 0 1px rgba(255,255,255,.55),1px 1px 2px rgba(0,0,0,.45)">АДМІНІСТРУВАННЯ»</span>
<span style="position:absolute;left:679.0px;top:540.8px;white-space:nowrap;font-size:10px;letter-spacing:0.587px;text-shadow:0 0 .4px #fff,1px 1px 1px rgba(0,0,0,.4)">ДИСЦИПЛІНА: ПУБЛІЧНЕ УПРАВЛІННЯ ТА АДМІНІСТРУВАННЯ</span>
<span style="position:absolute;left:747.1px;top:563.3px;white-space:nowrap;font-size:10px;letter-spacing:0.512px;text-shadow:0 0 .4px #fff,1px 1px 1px rgba(0,0,0,.4)">ПІДГОТУВАЛА: СТУДЕНТКА 2 КУРСУ ГРУПИ 21-ПУ</span>
<span style="position:absolute;left:837.7px;top:586.1px;white-space:nowrap;font-size:10px;letter-spacing:0.507px;text-shadow:0 0 .4px #fff,1px 1px 1px rgba(0,0,0,.4)">РАШЕВСЬКА СНІЖАНА ІГОРІВНА</span>
<svg class="abs" style="left:837px;top:595px" width="175" height="4" viewBox="0 0 175 4"><path d="M0 2 q1 -2 2 0 t2 0 t2 0 t2 0 t2 0 t2 0 t2 0 t2 0 t2 0 t2 0 t2 0 t2 0 t2 0 t2 0 t2 0 t2 0 t2 0 t2 0 t2 0 t2 0 t2 0 t2 0 t2 0 t2 0 t2 0 t2 0 t2 0 t2 0 t2 0 t2 0 t2 0 t2 0 t2 0 M124 2 q1 -2 2 0 t2 0 t2 0 t2 0 t2 0 t2 0 t2 0 t2 0 t2 0 t2 0 t2 0 t2 0 t2 0 t2 0 t2 0 t2 0 t2 0 t2 0 t2 0 t2 0 t2 0 t2 0 t2 0 t2 0 t2 0" stroke="#e03a3a" stroke-width=".9" fill="none"/></svg>
</div>
</div></div>
<div class="abs th" style="left:109px;top:345px;width:115px;height:64px">
<span style="position:absolute;left:7.0px;top:15.5px;white-space:nowrap;font-size:3.4px;letter-spacing:-0.031px;color:#ecd4f2;opacity:.9">ВСТУП</span><i style="left:7px;top:25px;width:100px"></i><i style="left:7px;top:28px;width:98px"></i><i style="left:7px;top:31px;width:12px"></i><i style="left:7px;top:36px;width:104px"></i><i style="left:7px;top:39px;width:30px"></i><i style="left:7px;top:44px;width:8px"></i><i style="left:9px;top:47px;width:40px"></i><i style="left:9px;top:50px;width:58px"></i><i style="left:9px;top:53px;width:50px"></i><i style="left:9px;top:56px;width:46px"></i></div>
<div class="abs th" style="left:109px;top:427.500px;width:115px;height:64px">
<span style="position:absolute;left:6.5px;top:3.3px;white-space:nowrap;font-size:3.6px;letter-spacing:-0.013px;color:#ecd4f2;opacity:.9">СУТНІСТЬ ТА ПРИНЦИПИ МІСЦЕВОГО</span><span style="position:absolute;left:6.5px;top:7.9px;white-space:nowrap;font-size:3.6px;letter-spacing:0.055px;color:#ecd4f2;opacity:.9">САМОВРЯДУВАННЯ</span><i style="left:7px;top:20px;width:104px"></i><i style="left:7px;top:23px;width:70px"></i><i style="left:7px;top:27px;width:104px"></i><i style="left:7px;top:30px;width:40px"></i><i style="left:7px;top:34px;width:100px"></i><i style="left:7px;top:37px;width:30px"></i><i style="left:50px;top:43px;width:12px"></i><i style="left:24px;top:48px;width:22px"></i><i style="left:24px;top:51px;width:16px"></i><i style="left:24px;top:54px;width:20px"></i><i style="left:64px;top:48px;width:34px"></i><i style="left:64px;top:51px;width:26px"></i><i style="left:64px;top:54px;width:40px"></i></div>
<div class="abs th" style="left:109px;top:509.500px;width:115px;height:64px">
<span style="position:absolute;left:6.5px;top:4.7px;white-space:nowrap;font-size:4.4px;letter-spacing:-0.484px;color:#ecd4f2;opacity:.9">ТЕОРЕТИЧНІ ОСНОВИ ДЕЦЕНТРАЛІЗАЦІЇ ВЛАДИ</span><i style="left:9px;top:18px;width:96px"></i><i style="left:9px;top:21px;width:60px"></i><i style="left:9px;top:25px;width:100px"></i><i style="left:9px;top:28px;width:70px"></i><i style="left:9px;top:32px;width:30px"></i><i style="left:9px;top:36px;width:66px"></i><i style="left:9px;top:40px;width:50px"></i><i style="left:9px;top:44px;width:88px"></i><i style="left:9px;top:48px;width:40px"></i><i style="left:9px;top:53px;width:96px"></i></div>
<div class="abs th" style="left:109px;top:591px;width:115px;height:64px">
<span style="position:absolute;left:6.0px;top:5.0px;white-space:nowrap;font-size:3.6px;letter-spacing:0.010px;color:#ecd4f2;opacity:.9">РОЛЬ ПУБЛІЧНОГО АДМІНІСТРУВАННЯ У ПРОЦЕСІ</span><span style="position:absolute;left:6.0px;top:9.4px;white-space:nowrap;font-size:3.6px;letter-spacing:0.007px;color:#ecd4f2;opacity:.9">ДЕЦЕНТРАЛІЗАЦІЇ</span><i style="left:5px;top:17px;width:106px;background:#f0e090"></i><i style="left:5px;top:20px;width:106px"></i><i style="left:5px;top:23px;width:50px"></i><i style="left:44px;top:28px;width:26px"></i><i style="left:18px;top:33px;width:26px"></i><i style="left:62px;top:33px;width:40px"></i><i style="left:6px;top:37px;width:46px"></i><i style="left:6px;top:40px;width:40px"></i><i style="left:6px;top:43px;width:44px"></i><i style="left:6px;top:46px;width:38px"></i><i style="left:56px;top:37px;width:54px"></i><i style="left:56px;top:40px;width:50px"></i><i style="left:56px;top:43px;width:54px"></i><i style="left:56px;top:46px;width:46px"></i></div>
<!-- thumbs scrollbar -->
<svg class="abs" style="left:244px;top:250px" width="8" height="7" viewBox="0 0 8 7"><path d="M4 .5L7.800 6.500H.2z" fill="#6a6a6a"/></svg>
<div class="abs" style="left:244.500px;top:261px;width:7px;height:192px;border-radius:4px;background:#747476"></div>
<!-- main scrollbar -->
<svg class="abs" style="left:1203px;top:250px" width="8" height="7" viewBox="0 0 8 7"><path d="M4 .5L7.800 6.500H.2z" fill="#6a6a6a"/></svg>
<div class="abs" style="left:1204px;top:260px;width:6.500px;height:31px;border-radius:3.500px;background:#747476"></div>
<svg class="abs" style="left:1203px;top:600px" width="8" height="40" viewBox="0 0 8 40"><path d="M.2 1h7.600L4 7z" fill="#6a6a6a"/><path d="M4 14.500l2.800 3H1.200zM4 18.200l2.800 3H1.200z" fill="#6a6a6a"/><path d="M4 32l2.800-3H1.200zM4 35.700l2.800-3H1.200z" fill="#6a6a6a"/></svg>
<!--/PANEL-->
<!--SLIDE-->
<div class="abs" style="left:387px;top:257px;width:687px;height:386px;overflow:hidden;background:radial-gradient(ellipse 55% 50% at 42% 106%,rgba(12,28,88,.85),rgba(12,28,88,0) 75%),linear-gradient(180deg,rgba(22,50,136,0) 42%,rgba(22,50,136,.9) 100%),linear-gradient(163deg,#5b1168 0%,#50157a 25%,#41218d 50%,#2f2e9a 72%,#2045aa 100%)">
<!--SLIDE_BEGIN-->
<svg class="abs" style="left:0;top:0" width="687" height="386" viewBox="0 0 687 386"><g fill="none" stroke="#fff"><circle cx="1.6" cy="119" r="177" stroke-width="1" opacity=".45"/><circle cx="1.6" cy="119" r="199" stroke-width="1.1" opacity=".5"/><circle cx="1.6" cy="119" r="164.5" stroke-width="13" stroke-dasharray=".7 2.8" opacity="0.17"/><circle cx="1.6" cy="119" r="208.5" stroke-width="11" stroke-dasharray=".7 3.6" opacity="0.15"/><circle cx="47" cy="103" r="39" stroke-width="1" opacity=".5"/><path d="M19 94 A30 30 0 1 1 40 136" stroke-width="1.800" opacity=".5"/><circle cx="47" cy="103" r="75" stroke-width=".8" stroke-dasharray="1 2" opacity=".35"/><circle cx="33" cy="0" r="36" stroke-width="1" opacity=".4"/><path d="M30 29 A29 29 0 0 0 60 8" stroke-width="1.800" opacity=".4"/><circle cx="33" cy="357" r="42" stroke-width="1" opacity=".4"/><path d="M62 330 A40 40 0 0 1 70 375" stroke-width="1.800" opacity=".35"/><path d="M-10 262 A168 168 0 0 0 212 140" stroke-width=".8" opacity=".3"/><path d="M-10 258 A163 163 0 0 0 150 230" stroke-width="7" stroke-dasharray=".7 3.500" opacity=".2"/><circle cx="179" cy="301" r="26" stroke-width=".8" opacity=".22"/><circle cx="179" cy="301" r="19" stroke-width="1.200" opacity=".18"/><circle cx="420" cy="54" r="44" stroke-width=".8" opacity=".18"/><path d="M392 40 A31 31 0 1 0 440 30" stroke-width="1.500" opacity=".16"/><path d="M0 190 L330 30" stroke-width=".6" opacity=".22"/><path d="M0 60 L300 386" stroke-width=".5" opacity=".12"/><path d="M151 176 l7 3 -7 3" stroke-width="1.300" opacity=".45"/></g><g font-size="6" fill="#fff" opacity=".5" font-family="Liberation Mono,monospace" text-anchor="middle"><text x="25" y="276" transform="rotate(7 25 276)">260</text><text x="58" y="276" transform="rotate(-4 58 276)">250</text><text x="92" y="272" transform="rotate(-15 92 272)">240</text><text x="125" y="261" transform="rotate(-26 125 261)">230</text><text x="153" y="247" transform="rotate(-36 153 247)">220</text><text x="178" y="226" transform="rotate(-47 178 226)">210</text><text x="196" y="205" transform="rotate(-56 196 205)">200</text><text x="208" y="178" transform="rotate(-65 208 178)">190</text><text x="214" y="150" transform="rotate(-74 214 150)">180</text><text x="216" y="118" transform="rotate(-85 216 118)">170</text><text x="213" y="88" transform="rotate(-95 213 88)">160</text><text x="204" y="58" transform="rotate(-106 204 58)">150</text><text x="192" y="30" transform="rotate(-117 192 30)">140</text></g></svg>
<div class="abs" style="left:-387px;top:-257px;width:1300px;height:689px;color:#fff">
<span style="position:absolute;left:730.3px;top:283.5px;white-space:nowrap;font-size:30px;letter-spacing:0.320px;font-family:'Liberation Serif','DejaVu Serif',serif;text-shadow:0 0 1px rgba(255,255,255,.55),1px 1px 2px rgba(0,0,0,.45)">«РОЛЬ МІСЦЕВОГО</span>
<span style="position:absolute;left:687.3px;top:320.1px;white-space:nowrap;font-size:30px;letter-spacing:0.353px;font-family:'Liberation Serif','DejaVu Serif',serif;text-shadow:0 0 1px rgba(255,255,255,.55),1px 1px 2px rgba(0,0,0,.45)">САМОВРЯДУВАННЯ В</span>
<span style="position:absolute;left:843.0px;top:356.7px;white-space:nowrap;font-size:30px;letter-spacing:-0.094px;font-family:'Liberation Serif','DejaVu Serif',serif;text-shadow:0 0 1px rgba(255,255,255,.55),1px 1px 2px rgba(0,0,0,.45)">КОНТЕКСТІ</span>
<span style="position:absolute;left:629.0px;top:393.3px;white-space:nowrap;font-size:30px;letter-spacing:0.373px;font-family:'Liberation Serif','DejaVu Serif',serif;text-shadow:0 0 1px rgba(255,255,255,.55),1px 1px 2px rgba(0,0,0,.45)">ДЕЦЕНТРАЛІЗАЦІЇ ВЛАДИ</span>
<span style="position:absolute;left:770.6px;top:429.9px;white-space:nowrap;font-size:30px;letter-spacing:0.084px;font-family:'Liberation Serif','DejaVu Serif',serif;text-shadow:0 0 1px rgba(255,255,255,.55),1px 1px 2px rgba(0,0,0,.45)">ТА ПУБЛІЧНОГО</span>
<span style="position:absolute;left:699.4px;top:466.5px;white-space:nowrap;font-size:30px;letter-spacing:0.363px;font-family:'Liberation Serif','DejaVu Serif',serif;text-shadow:0 0 1px rgba(255,255,255,.55),1px 1px 2px rgba(0,0,0,.45)">АДМІНІСТРУВАННЯ»</span>
<span style="position:absolute;left:679.0px;top:540.8px;white-space:nowrap;font-size:10px;letter-spacing:0.587px;text-shadow:0 0 .4px #fff,1px 1px 1px rgba(0,0,0,.4)">ДИСЦИПЛІНА: ПУБЛІЧНЕ УПРАВЛІННЯ ТА АДМІНІСТРУВАННЯ</span>
<span style="position:absolute;left:747.1px;top:563.3px;white-space:nowrap;font-size:10px;letter-spacing:0.512px;text-shadow:0 0 .4px #fff,1px 1px 1px rgba(0,0,0,.4)">ПІДГОТУВАЛА: СТУДЕНТКА 2 КУРСУ ГРУПИ 21-ПУ</span>
<span style="position:absolute;left:837.7px;top:586.1px;white-space:nowrap;font-size:10px;letter-spacing:0.507px;text-shadow:0 0 .4px #fff,1px 1px 1px rgba(0,0,0,.4)">РАШЕВСЬКА СНІЖАНА ІГОРІВНА</span>
<svg class="abs" style="left:837px;top:595px" width="175" height="4" viewBox="0 0 175 4"><path d="M0 2 q1 -2 2 0 t2 0 t2 0 t2 0 t2 0 t2 0 t2 0 t2 0 t2 0 t2 0 t2 0 t2 0 t2 0 t2 0 t2 0 t2 0 t2 0 t2 0 t2 0 t2 0 t2 0 t2 0 t2 0 t2 0 t2 0 t2 0 t2 0 t2 0 t2 0 t2 0 t2 0 t2 0 t2 0 M124 2 q1 -2 2 0 t2 0 t2 0 t2 0 t2 0 t2 0 t2 0 t2 0 t2 0 t2 0 t2 0 t2 0 t2 0 t2 0 t2 0 t2 0 t2 0 t2 0 t2 0 t2 0 t2 0 t2 0 t2 0 t2 0 t2 0" stroke="#e03a3a" stroke-width=".9" fill="none"/></svg>
</div>
<!--SLIDE_END-->
<!-- selection -->
<div class="abs" style="left:223px;top:110px;width:407px;height:137px;border:1px dashed rgba(255,255,255,.75)"></div>
<div class="abs" style="left:426.500px;top:85px;width:1px;height:25px;background:rgba(255,255,255,.7)"></div>
<svg class="abs" style="left:420px;top:76px" width="14" height="14" viewBox="0 0 14 14"><circle cx="7" cy="7" r="4.200" fill="none" stroke="#e8e8e8" stroke-width="1.600"/><path d="M9 1.500l2.500 2-3 1z" fill="#e8e8e8"/></svg>
<div class="hd" style="left:219.500px;top:106.500px"></div><div class="hd" style="left:423px;top:106.500px"></div><div class="hd" style="left:626px;top:106.500px"></div>
<div class="hd" style="left:219.500px;top:175.500px"></div><div class="hd" style="left:626px;top:175.500px"></div>
<div class="hd" style="left:219.500px;top:243.500px"></div><div class="hd" style="left:423px;top:243.500px"></div><div class="hd" style="left:626px;top:243.500px"></div>
<div class="abs" style="left:194px;top:230px;width:17px;height:17px;background:#f4f6fa;border:1px solid #b8c4d8"></div>
<svg class="abs" style="left:196px;top:232px" width="13" height="13" viewBox="0 0 13 13"><path d="M2 6.500h9" stroke="#2b6fd0" stroke-width="1"/><path d="M6.500 1v3.500M4.800 3l1.700 1.700L8.200 3M6.500 12V8.500M4.800 10l1.700-1.700L8.200 10" stroke="#2b6fd0" stroke-width="1" fill="none"/></svg>
</div>
<!--/SLIDE-->
</div></div>
<!-- pen button -->
<div class="abs" style="left:33.500px;top:585.500px;width:33px;height:33px;border-radius:50%;background:#2a2e30"></div>
<svg class="abs" style="left:40px;top:592px" width="20" height="20" viewBox="0 0 20 20"><path d="M3.500 13.500L12 4.500l2-1.500 1.500 1.500L14.500 7 6 15.500H3.500z" fill="none" stroke="#1fdc8c" stroke-width="1.500" stroke-linejoin="round"/><path d="M11.500 5l3 3" stroke="#1fdc8c" stroke-width="1.200"/><path d="M3 18h12" stroke="#1fdc8c" stroke-width="1.500"/></svg>
<div id="tool" class="abs" style="left:14px;top:642px;width:1267px;height:47px;background:#000;overflow:hidden">
<div class="abs" style="left:-14px;top:-642px;width:1300px;height:689px">
<!-- audio -->
<svg class="abs" style="left:55px;top:652px" width="28" height="28" viewBox="0 0 28 28"><rect x="10.300" y="2.500" width="7.400" height="14" rx="3.700" fill="none" stroke="#fff" stroke-width="1.600"/><path d="M6.500 12.500a7.500 7.500 0 0 0 15 0M14 20v5.500M9.500 25.800h9" fill="none" stroke="#fff" stroke-width="1.600" stroke-linecap="round"/><path d="M2 24.500L25.500 2.500" stroke="#ea2e63" stroke-width="2.200" stroke-linecap="round"/></svg>
<svg class="abs cr" style="left:97.500px;top:661.500px" width="10" height="7" viewBox="0 0 10 7"><path d="M1.200 5.800L5 1.800l3.800 4" fill="none" stroke="#fff" stroke-width="1.700" stroke-linecap="round" stroke-linejoin="round"/></svg>
<div class="lb" style="left:69px">Audio</div>
<!-- video -->
<div class="abs" style="left:115px;top:648.500px;width:104px;height:60px;border-radius:9px;background:#1b1b1b"></div>
<div class="abs" style="left:194px;top:651.500px;width:23px;height:28px;border-radius:5px;background:#393939"></div>
<svg class="abs" style="left:153px;top:656px" width="29" height="19" viewBox="0 0 29 19"><rect x="1.500" y="2" width="17.500" height="14.500" rx="3.500" fill="none" stroke="#fff" stroke-width="1.600"/><path d="M21.500 9.300L27 4v10.500z" fill="none" stroke="#fff" stroke-width="1.600" stroke-linejoin="round"/></svg>
<svg class="abs cr" style="left:201px;top:661.500px" width="10" height="7" viewBox="0 0 10 7"><path d="M1.200 5.800L5 1.800l3.800 4" fill="none" stroke="#fff" stroke-width="1.700" stroke-linecap="round" stroke-linejoin="round"/></svg>
<div class="lb" style="left:166px">Video</div>
<!-- participants -->
<svg class="abs" style="left:412px;top:655px" width="23" height="22" viewBox="0 0 23 22"><circle cx="7" cy="4.800" r="2.700" fill="none" stroke="#fff" stroke-width="1.500"/><path d="M1.500 18.500v-3.500a4 4 0 0 1 4-4h2" fill="none" stroke="#fff" stroke-width="1.500" stroke-linecap="round"/><circle cx="15" cy="8.800" r="2.700" fill="none" stroke="#fff" stroke-width="1.500"/><path d="M9.500 19v-1a4.500 4.500 0 0 1 4.500-4.500h2a4.500 4.500 0 0 1 4.500 4.500v1z" fill="none" stroke="#fff" stroke-width="1.500" stroke-linejoin="round"/></svg>
<div class="abs" style="left:440px;top:656px;font-size:11.500px;line-height:12px;color:#fff;font-weight:bold">8</div>
<svg class="abs cr" style="left:473.500px;top:661px" width="10" height="7" viewBox="0 0 10 7"><path d="M1.200 5.800L5 1.800l3.800 4" fill="none" stroke="#fff" stroke-width="1.700" stroke-linecap="round" stroke-linejoin="round"/></svg>
<div class="lb" style="left:422.700px">Participants</div>
<!-- chat -->
<svg class="abs" style="left:525px;top:653px" width="26" height="25" viewBox="0 0 26 25"><path d="M8.500 4.500V4a2.500 2.500 0 0 1 2.500-2.500h11A2.500 2.500 0 0 1 24.500 4v8a2.500 2.500 0 0 1-2.500 2.500h-1" fill="none" stroke="#fff" stroke-width="1.500"/><path d="M4 6h12.500A2.500 2.500 0 0 1 19 8.500v8a2.500 2.500 0 0 1-2.500 2.500H10l-4.500 4v-4H4a2.500 2.500 0 0 1-2.500-2.500v-8A2.500 2.500 0 0 1 4 6z" fill="none" stroke="#fff" stroke-width="1.500" stroke-linejoin="round"/><circle cx="6.300" cy="12.500" r="1.100" fill="#fff"/><circle cx="10.300" cy="12.500" r="1.100" fill="#fff"/><circle cx="14.300" cy="12.500" r="1.100" fill="#fff"/></svg>
<svg class="abs cr" style="left:568.500px;top:661px" width="10" height="7" viewBox="0 0 10 7"><path d="M1.200 5.800L5 1.800l3.800 4" fill="none" stroke="#fff" stroke-width="1.700" stroke-linecap="round" stroke-linejoin="round"/></svg>
<div class="lb" style="left:538.600px">Chat</div>
<!-- react -->
<svg class="abs" style="left:614px;top:654px" width="28" height="24" viewBox="0 0 28 24"><path d="M13 5.500C10 .5 2.500 1.500 2.500 7.500c0 5 5 9.500 9.500 14 6-3.500 13.500-8 13.500-13.500 0-6-8.500-7-12.500-2.500z" fill="none" stroke="#fff" stroke-width="1.600" stroke-linejoin="round"/></svg>
<svg class="abs cr" style="left:653px;top:661px" width="10" height="7" viewBox="0 0 10 7"><path d="M1.200 5.800L5 1.800l3.800 4" fill="none" stroke="#fff" stroke-width="1.700" stroke-linecap="round" stroke-linejoin="round"/></svg>
<div class="lb" style="left:628px">React</div>
<!-- share -->
<div class="abs" style="left:710px;top:655px;width:25px;height:20.500px;border-radius:4px;background:#20e48c"></div>
<svg class="abs" style="left:716px;top:658px" width="13" height="15" viewBox="0 0 13 15"><path d="M6.500 13.500V3M2 7l4.500-4.500L11 7" fill="none" stroke="#000" stroke-width="2.300" stroke-linecap="round" stroke-linejoin="round"/></svg>
<svg class="abs cr" style="left:756.300px;top:661px" width="10" height="7" viewBox="0 0 10 7"><path d="M1.200 5.800L5 1.800l3.800 4" fill="none" stroke="#fff" stroke-width="1.700" stroke-linecap="round" stroke-linejoin="round"/></svg>
<div class="lb" style="left:722px">Share</div>
<!-- host tools -->
<svg class="abs" style="left:805px;top:654px" width="22" height="23" viewBox="0 0 22 23"><path d="M11 1.500C8 3.500 5 4 2 4c0 8 2 14 9 17.500C18 18 20 12 20 4c-3 0-6-.5-9-2.500z" fill="none" stroke="#fff" stroke-width="1.600" stroke-linejoin="round"/><path d="M11 4.500c-2 1.200-4 1.800-6 2 0 2 .2 3.500.6 5H11zM11 11.500h5.400c-.8 3-2.500 5.300-5.400 7z" fill="#fff"/></svg>
<div class="lb" style="left:816px">Host tools</div>
<!-- meeting info -->
<svg class="abs" style="left:897px;top:652px" width="26" height="26" viewBox="0 0 26 26"><circle cx="13" cy="13" r="11.500" fill="none" stroke="#fff" stroke-width="1.600"/><path d="M10.800 11h2.500v7.500M10.300 18.700h5.600" fill="none" stroke="#fff" stroke-width="1.600"/><circle cx="13" cy="7.300" r="1.300" fill="#fff"/></svg>
<div class="lb" style="left:910px">Meeting info</div>
<!-- more -->
<svg class="abs" style="left:993.500px;top:652px" width="26" height="26" viewBox="0 0 26 26"><circle cx="13" cy="13" r="11.500" fill="none" stroke="#fff" stroke-width="1.600"/><circle cx="8" cy="13" r="1.200" fill="#fff"/><circle cx="13" cy="13" r="1.200" fill="#fff"/><circle cx="18" cy="13" r="1.200" fill="#fff"/></svg>
<div class="lb" style="left:1006.600px">More</div>
<!-- end -->
<svg class="abs" style="left:1216px;top:653px" width="28" height="24" viewBox="0 0 28 24"><path d="M8.300 1.500h11.400L26 12l-6.300 10.500H8.300L2 12z" fill="none" stroke="#ea1c60" stroke-width="1.700" stroke-linejoin="round"/><path d="M10.500 8.500l7 7M17.500 8.500l-7 7" stroke="#fff" stroke-width="2.600" stroke-linecap="round"/></svg>
<div class="lb" style="left:1230.700px">End</div>
</div></div>
</div>
</body>
</html>
